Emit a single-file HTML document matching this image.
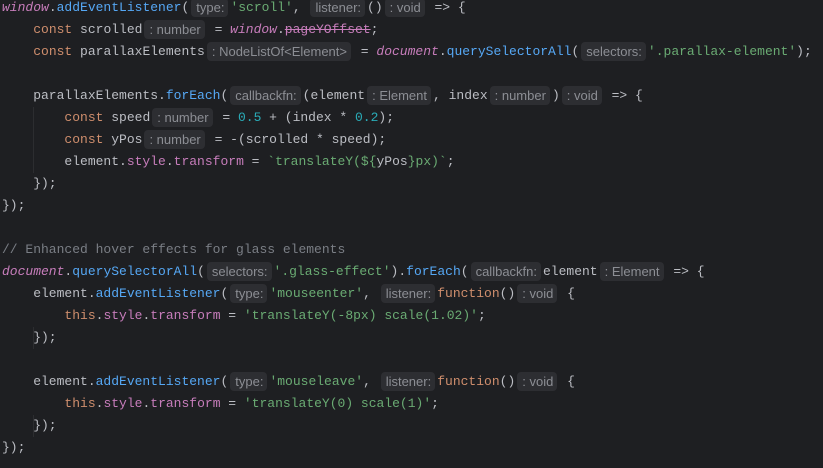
<!DOCTYPE html>
<html><head><meta charset="utf-8"><style>
html,body{margin:0;padding:0;background:#1e1f22;width:823px;height:468px;overflow:hidden}
.c{position:relative;font-family:"Liberation Mono",monospace;font-size:13px;color:#bcbec4}
.l{height:22px;line-height:22px;white-space:pre;padding-left:2px;position:relative;top:-3px}
.h{display:inline-block;font-family:"Liberation Sans",sans-serif;font-size:13px;color:#8c8e94;background:#2d2e32;border-radius:4px;height:19px;line-height:19px;padding:0 4px 0 5px;margin:0 2px;vertical-align:-1px}
.k{color:#cf8e6d}.f{color:#56a8f5}.s{color:#6aab73}.p{color:#c77dbb}.i{color:#c77dbb;font-style:italic}.n{color:#2aacb8}.cm{color:#7a7e85}
.st{text-decoration:line-through}
.g{position:absolute;width:1px;background:#2c2d30}
</style></head><body><div class="c">
<div class="g" style="left:33px;top:107px;height:66px"></div>
<div class="g" style="left:33px;top:327px;height:22px"></div>
<div class="g" style="left:33px;top:415px;height:22px"></div>
<div class="l"><span class="i">window</span>.<span class="f">addEventListener</span>(<span class="h">type:</span><span class="s">'scroll'</span>, <span class="h">listener:</span>()<span class="h">: void</span> =&gt; {</div>
<div class="l">    <span class="k">const</span> scrolled<span class="h">: number</span> = <span class="i">window</span>.<span class="p st">pageYOffset</span>;</div>
<div class="l">    <span class="k">const</span> parallaxElements<span class="h">: NodeListOf&lt;Element&gt;</span> = <span class="i">document</span>.<span class="f">querySelectorAll</span>(<span class="h">selectors:</span><span class="s">'.parallax-element'</span>);</div>
<div class="l"> </div>
<div class="l">    parallaxElements.<span class="f">forEach</span>(<span class="h">callbackfn:</span>(element<span class="h">: Element</span>, index<span class="h">: number</span>)<span class="h">: void</span> =&gt; {</div>
<div class="l">        <span class="k">const</span> speed<span class="h">: number</span> = <span class="n">0.5</span> + (index * <span class="n">0.2</span>);</div>
<div class="l">        <span class="k">const</span> yPos<span class="h">: number</span> = -(scrolled * speed);</div>
<div class="l">        element.<span class="p">style</span>.<span class="p">transform</span> = <span class="s">`translateY(${</span>yPos<span class="s">}px)`</span>;</div>
<div class="l">    });</div>
<div class="l">});</div>
<div class="l"> </div>
<div class="l"><span class="cm">// Enhanced hover effects for glass elements</span></div>
<div class="l"><span class="i">document</span>.<span class="f">querySelectorAll</span>(<span class="h">selectors:</span><span class="s">'.glass-effect'</span>).<span class="f">forEach</span>(<span class="h">callbackfn:</span>element<span class="h">: Element</span> =&gt; {</div>
<div class="l">    element.<span class="f">addEventListener</span>(<span class="h">type:</span><span class="s">'mouseenter'</span>, <span class="h">listener:</span><span class="k">function</span>()<span class="h">: void</span> {</div>
<div class="l">        <span class="k">this</span>.<span class="p">style</span>.<span class="p">transform</span> = <span class="s">'translateY(-8px) scale(1.02)'</span>;</div>
<div class="l">    });</div>
<div class="l"> </div>
<div class="l">    element.<span class="f">addEventListener</span>(<span class="h">type:</span><span class="s">'mouseleave'</span>, <span class="h">listener:</span><span class="k">function</span>()<span class="h">: void</span> {</div>
<div class="l">        <span class="k">this</span>.<span class="p">style</span>.<span class="p">transform</span> = <span class="s">'translateY(0) scale(1)'</span>;</div>
<div class="l">    });</div>
<div class="l">});</div>
</div></body></html>
